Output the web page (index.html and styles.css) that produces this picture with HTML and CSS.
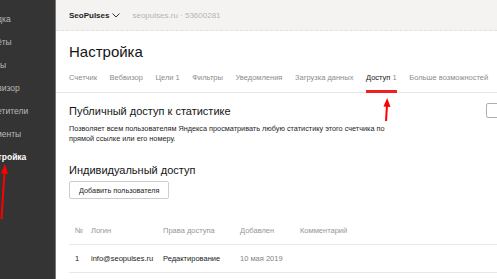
FILE: index.html
```
<!DOCTYPE html>
<html lang="ru">
  <head>
    <meta charset="UTF-8" />
    <meta name="viewport" content="width=device-width, initial-scale=1.0" />
    <title>Настройка</title>
    <link rel="stylesheet" href="styles.css">
  </head>
  <body>
    <div class="app">
      <div class="sidebar">
        <ul class="menu">
          <li>Сводка</li>
          <li>Отчёты</li>
          <li>Карты</li>
          <li>Вебвизор</li>
          <li>Посетители</li>
          <li>Сегменты</li>
          <li class="active">Настройка</li>
        </ul>
      </div>

      <div class="main">
        <div class="topbar">
          <span class="site">SeoPulses
            <svg class="chev" width="8" height="5" viewBox="0 0 8 5"><path d="M0.5 0.5 L4 4 L7.5 0.5" fill="none" stroke="#333" stroke-width="1"/></svg>
          </span>
          <span class="counter">seopulses.ru · 53600281</span>
        </div>

        <div class="content">
          <h1 class="title">Настройка</h1>

          <div class="tabs">
            <span class="tab">Счетчик</span>
            <span class="tab">Вебвизор</span>
            <span class="tab">Цели 1</span>
            <span class="tab">Фильтры</span>
            <span class="tab">Уведомления</span>
            <span class="tab">Загрузка данных</span>
            <span class="tab active">Доступ <i>1</i></span>
            <span class="tab">Больше возможностей</span>
          </div>

          <div class="section-head">
            <h2>Публичный доступ к статистике</h2>
            <span class="check"></span>
          </div>
          <p class="desc">Позволяет всем пользователям Яндекса просматривать любую статистику этого счетчика по<br>прямой ссылке или его номеру.</p>

          <h2 class="indiv">Индивидуальный доступ</h2>
          <button type="button" class="add-btn">Добавить пользователя</button>

          <div class="users">
            <div class="row head">
              <span>№</span>
              <span>Логин</span>
              <span>Права доступа</span>
              <span>Добавлен</span>
              <span>Комментарий</span>
            </div>
            <div class="row">
              <span>1</span>
              <span>info@seopulses.ru</span>
              <span>Редактирование</span>
              <span class="date">10 мая 2019</span>
              <span></span>
            </div>
          </div>
        </div>
      </div>
    </div>

    <!-- red annotation arrows -->
    <svg class="arrow arrow-side" width="10" height="56" viewBox="0 0 10 56">
      <path d="M4.5 8 L1.5 55" stroke="#f00" stroke-width="2" fill="none"/>
      <path d="M4.8 0 L8 10 L1 9.5 Z" fill="#f00"/>
    </svg>
    <svg class="arrow arrow-tab" width="10" height="24" viewBox="0 0 10 24">
      <path d="M5 7 L4 23" stroke="#f00" stroke-width="2" fill="none"/>
      <path d="M5.2 0 L8.5 9 L1.5 8.5 Z" fill="#f00"/>
    </svg>
  </body>
</html>
```

FILE: styles.css
```
body {
  margin: 0;
  padding: 0;
  width: 497px;
  height: 279px;
  overflow: hidden;
  position: relative;
  font-family: "Liberation Sans", Arial, sans-serif;
  background: white;
  color: rgb(34, 34, 34);
}
.app {
  display: flex;
  height: 100%;
}
.sidebar {
  width: 55px;
  flex: none;
  background: rgb(52, 52, 52);
  border-right: 1px solid rgb(120, 120, 120);
  overflow: hidden;
}
.menu {
  list-style: none;
  margin: 0 0 0 -18px;
  padding: 8px 0 0 0;
  font-size: 8.5px;
  color: rgb(185, 185, 185);
  white-space: nowrap;
}
.menu li {
  height: 23px;
  line-height: 23px;
}
.menu li.active {
  color: white;
  font-weight: 700;
}
.main {
  flex: 1;
  min-width: 0;
}
.topbar {
  height: 31px;
  background: rgb(244, 243, 241);
  border-bottom: 1px dashed rgb(225, 224, 222);
  box-sizing: border-box;
  display: flex;
  align-items: center;
  padding: 0 13px;
  font-size: 8px;
}
.site {
  display: flex;
  align-items: center;
  gap: 3px;
  font-weight: 600;
  color: rgb(30, 30, 30);
}
.counter {
  margin-left: 12px;
  color: rgb(180, 180, 180);
}
.content {
  padding: 0 0 0 13px;
}
.title {
  margin: 0;
  padding-top: 11px;
  height: 30px;
  box-sizing: border-box;
  font-size: 15px;
  font-weight: 400;
  line-height: 20px;
  color: rgb(20, 20, 20);
}
.tabs {
  display: flex;
  gap: 12.6px;
  margin-left: -13px;
  padding-left: 13px;
  height: 32px;
  box-sizing: border-box;
  border-bottom: 1px solid rgb(230, 230, 230);
  font-size: 7.5px;
  color: rgb(140, 140, 140);
  white-space: nowrap;
}
.tab {
  padding-top: 12px;
  line-height: 10px;
}
.tab.active {
  color: rgb(20, 20, 20);
  border-bottom: 3px solid rgb(245, 30, 30);
  height: 17px;
}
.tab.active i {
  font-style: normal;
  color: rgb(140, 140, 140);
}
.section-head {
  width: 437px;
  display: flex;
  align-items: center;
  justify-content: space-between;
  margin-top: 10px;
}
h2 {
  margin: 0;
  font-size: 11px;
  font-weight: 400;
  color: rgb(20, 20, 20);
}
.check {
  width: 20px;
  height: 15px;
  border: 1px solid rgb(175, 175, 175);
  border-radius: 2px;
  box-sizing: border-box;
}
.desc {
  margin: 6px 0 0 0;
  font-size: 7.3px;
  line-height: 10px;
  color: rgb(30, 30, 30);
}
.indiv {
  margin-top: 20px;
}
.add-btn {
  display: block;
  margin-top: 5px;
  height: 18px;
  padding: 0 9px;
  font-family: "Liberation Sans", Arial, sans-serif;
  font-size: 7.3px;
  color: rgb(30, 30, 30);
  background: white;
  border: 1px solid rgb(205, 205, 205);
  border-radius: 2px;
}
.users {
  margin-top: 18px;
  font-size: 7.5px;
}
.row {
  display: grid;
  grid-template-columns: 22px 72px 77px 60px 1fr;
  height: 27px;
  align-items: center;
  border-bottom: 1px solid rgb(232, 232, 232);
}
.row span:first-child {
  padding-left: 6px;
}
.row.head {
  color: rgb(150, 150, 150);
}
.row .date {
  color: rgb(130, 130, 130);
}
.arrow {
  position: absolute;
}
.arrow-side {
  left: 0;
  top: 164px;
}
.arrow-tab {
  left: 382px;
  top: 98px;
}
```
